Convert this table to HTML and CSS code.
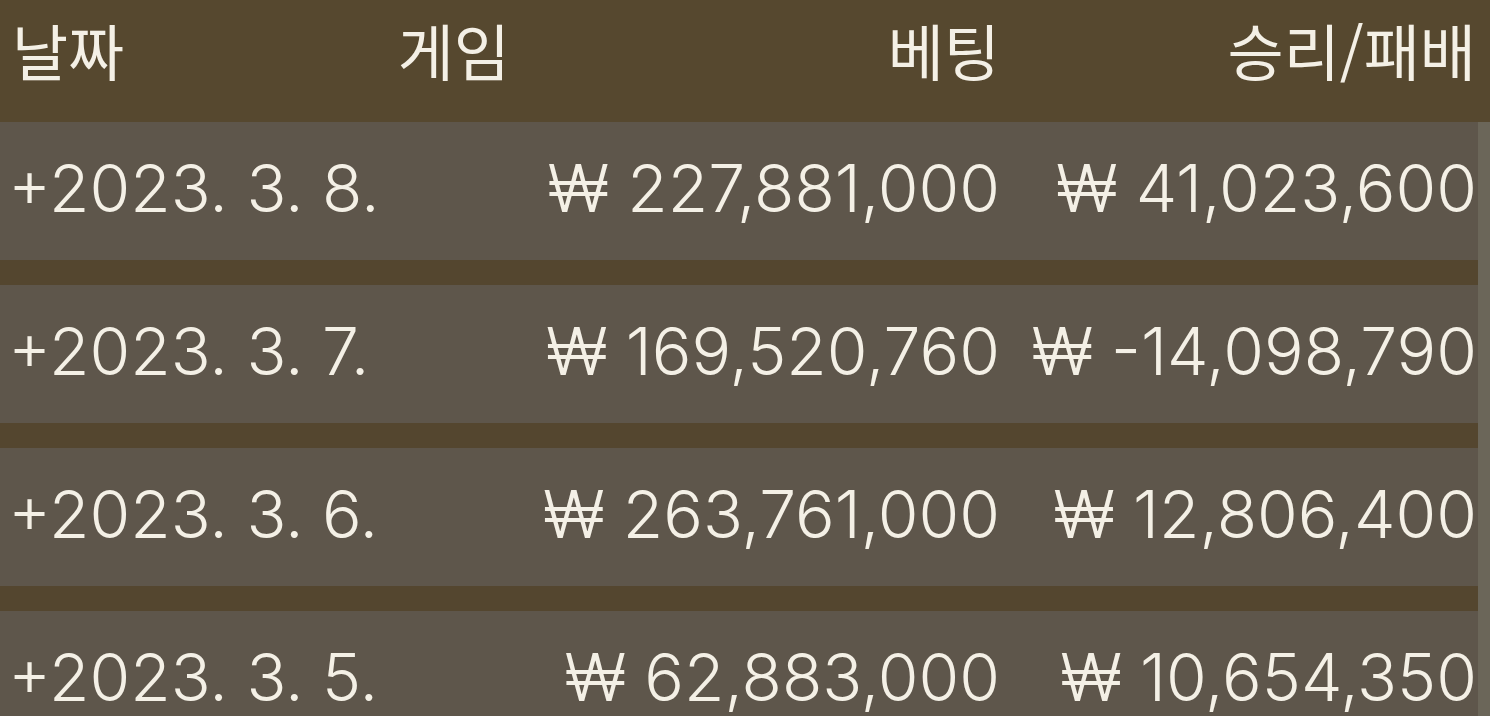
FILE: index.html
```html
<!DOCTYPE html>
<html lang="ko">
<head>
  <meta charset="UTF-8">
  <title>베팅 내역</title>
  <link rel="stylesheet" href="styles.css">
</head>
<body>

  <!-- 헤더 -->
  <div class="head">
    <span class="col-date">날짜</span>
    <span class="col-num">게임</span>
    <span class="col-num">베팅</span>
    <span class="col-num">승리/패배</span>
  </div>

  <!-- 목록 -->
  <div class="list">
    <div class="row">
      <span class="col-date">+2023. 3. 8.</span>
      <span class="col-num"></span>
      <span class="col-num">₩ 227,881,000</span>
      <span class="col-num">₩ 41,023,600</span>
    </div>
    <div class="row">
      <span class="col-date">+2023. 3. 7.</span>
      <span class="col-num"></span>
      <span class="col-num">₩ 169,520,760</span>
      <span class="col-num">₩ -14,098,790</span>
    </div>
    <div class="row">
      <span class="col-date">+2023. 3. 6.</span>
      <span class="col-num"></span>
      <span class="col-num">₩ 263,761,000</span>
      <span class="col-num">₩ 12,806,400</span>
    </div>
    <div class="row">
      <span class="col-date">+2023. 3. 5.</span>
      <span class="col-num"></span>
      <span class="col-num">₩ 62,883,000</span>
      <span class="col-num">₩ 10,654,350</span>
    </div>
  </div>

</body>
</html>
```

FILE: styles.css
```css
body {
  margin: 0;
  background: #54462f;
  color: #f4f0e6;
  font-family: Inter, 'Noto Sans CJK KR', sans-serif;
  font-weight: 350;
  font-size: 66px;
  overflow: hidden;
}

.head, .row {
  display: grid;
  grid-template-columns: 250px 248px 490px 1fr;
  align-items: center;
  white-space: nowrap;
}

.head {
  height: 122px;
  padding: 0 14px 24px 12px;
  box-sizing: border-box;
  background: #56482f;
}

.head span {
  font-family: 'Noto Sans CJK KR', sans-serif;
  font-weight: 400;
  font-size: 61px;
}

.list {
  display: flex;
  flex-direction: column;
  gap: 25px;
  border-right: 12px solid #6b6659;
}

.row {
  height: 138px;
  padding: 0 1px 6px 12px;
  box-sizing: border-box;
  background: #5e564b;
}

.row .col-date {
  margin-left: -4px;
}

.col-date {
  text-align: left;
}

.col-num {
  text-align: right;
}
```
